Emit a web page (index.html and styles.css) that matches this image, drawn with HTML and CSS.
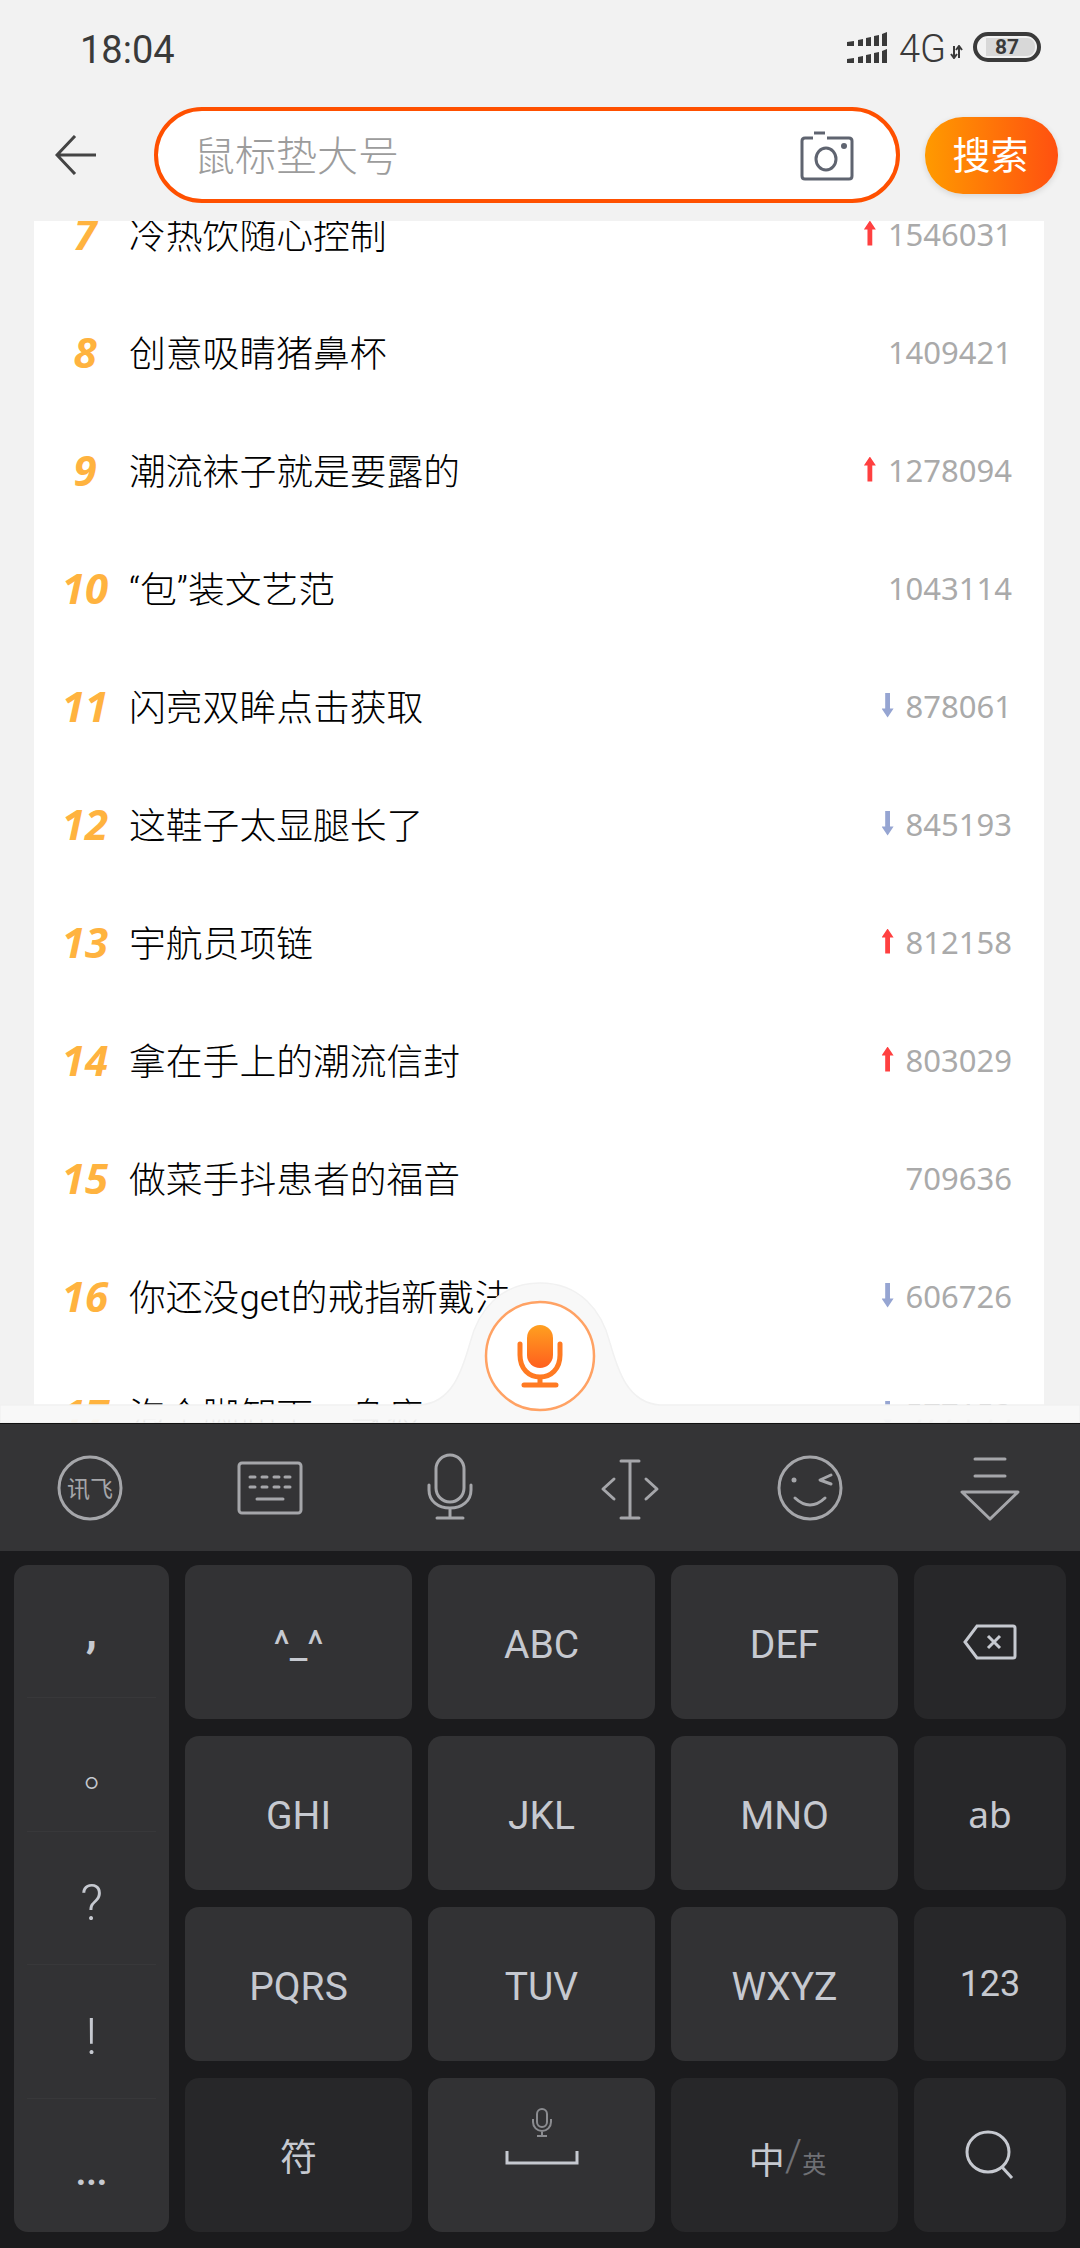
FILE: index.html
```html
<!DOCTYPE html>
<html lang="zh-CN">
  <head>
    <meta charset="UTF-8" />
    <meta name="viewport" content="width=device-width, initial-scale=1.0" />
    <title>搜索</title>
    <link rel="stylesheet" href="styles.css">
  </head>
  <body>
    <div class="page">
      <div class="status-bar">
        <span class="status-time">18:04</span>
        <div class="status-right">
          <svg class="signal" width="40" height="31" viewBox="0 0 40 31">
            <path d="M0 10 L7 9 V14 H0Z M11 8 L16 7 V14 H11Z M19 6 L24 5 V14 H19Z M27 4 L32 3 V14 H27Z M35 2 L40 0 V14 H35Z" />
            <path d="M0 27 L7 26 V31 H0Z M11 25 L16 24 V31 H11Z M19 23 L24 22 V31 H19Z M27 21 L32 20 V31 H27Z M35 19 L40 17 V31 H35Z" />
          </svg>
          <span class="network">4G</span>
          <svg class="net-arrows" width="13" height="14" viewBox="0 0 13 14">
            <path d="M4 1 V13 M1 9 L4 13 L7 9 M9 13 V1 M6 5 L9 1 L12 5" />
          </svg>
          <div class="battery"><span class="battery-level">87</span></div>
        </div>
      </div>

      <div class="search-bar">
        <svg class="back-icon" width="41" height="40" viewBox="0 0 41 40">
          <path d="M41 20 H2 M20 1 L2 20 L20 39" />
        </svg>
        <div class="search-box">
          <span class="search-placeholder">鼠标垫大号</span>
          <svg class="camera-icon" width="54" height="50" viewBox="0 0 54 50">
            <path d="M13 7 H5 Q2 7 2 10 V45 Q2 48 5 48 H49 Q52 48 52 45 V10 Q52 7 49 7 H27" />
            <path d="M14 2 H25" />
            <ellipse cx="26" cy="28" rx="10" ry="11" />
            <circle class="camera-dot" cx="44" cy="15" r="3" />
          </svg>
        </div>
        <button class="search-btn">搜索</button>
      </div>

      <div class="list-area">
        <div class="list-card">
          <div class="rank-row"><span class="rank">7</span><span class="rank-title">冷热饮随心控制</span><span class="trend trend-up"></span><span class="rank-count">1546031</span></div>
          <div class="rank-row"><span class="rank">8</span><span class="rank-title">创意吸睛猪鼻杯</span><span class="rank-count">1409421</span></div>
          <div class="rank-row"><span class="rank">9</span><span class="rank-title">潮流袜子就是要露的</span><span class="trend trend-up"></span><span class="rank-count">1278094</span></div>
          <div class="rank-row"><span class="rank">10</span><span class="rank-title">“包”装文艺范</span><span class="rank-count">1043114</span></div>
          <div class="rank-row"><span class="rank">11</span><span class="rank-title">闪亮双眸点击获取</span><span class="trend trend-down"></span><span class="rank-count">878061</span></div>
          <div class="rank-row"><span class="rank">12</span><span class="rank-title">这鞋子太显腿长了</span><span class="trend trend-down"></span><span class="rank-count">845193</span></div>
          <div class="rank-row"><span class="rank">13</span><span class="rank-title">宇航员项链</span><span class="trend trend-up"></span><span class="rank-count">812158</span></div>
          <div class="rank-row"><span class="rank">14</span><span class="rank-title">拿在手上的潮流信封</span><span class="trend trend-up"></span><span class="rank-count">803029</span></div>
          <div class="rank-row"><span class="rank">15</span><span class="rank-title">做菜手抖患者的福音</span><span class="rank-count">709636</span></div>
          <div class="rank-row"><span class="rank">16</span><span class="rank-title">你还没get的戒指新戴法</span><span class="trend trend-down"></span><span class="rank-count">606726</span></div>
          <div class="rank-row"><span class="rank">17</span><span class="rank-title">泡个脚卸下一身疲</span><span class="trend trend-down"></span><span class="rank-count">577153</span></div>
        </div>

        <svg class="voice-dock" width="1080" height="142" viewBox="0 0 1080 142">
          <defs>
            <linearGradient id="dockFill" gradientUnits="userSpaceOnUse" x1="0" y1="124" x2="0" y2="142">
              <stop offset="0.75" stop-color="#f8f8f8" />
              <stop offset="1" stop-color="#f8f8f8" stop-opacity="0.9" />
            </linearGradient>
            <linearGradient id="micFill" x1="0" y1="0" x2="0" y2="1">
              <stop offset="0" stop-color="#ffa020" />
              <stop offset="1" stop-color="#ff5f1e" />
            </linearGradient>
          </defs>
          <path class="dock-shape" d="M0 124 H420 C452 122 462 90 470 62 C478 30 500 2 540 2 C580 2 602 30 610 62 C618 90 628 122 660 124 H1080 V142 H0 Z" />
          <circle class="dock-circle" cx="540" cy="75" r="54" />
          <rect x="527" y="44" width="26" height="43" rx="13" fill="url(#micFill)" />
          <path class="dock-mic" d="M520 63 V74 C520 88 529 96 540 96 C551 96 560 88 560 74 V63 M540 96 V103 M524 104 H556" />
        </svg>
      </div>

      <div class="kb-toolbar">
        <div class="kb-tool">
          <svg width="72" height="72" viewBox="0 0 72 72">
            <circle cx="36" cy="36" r="31" />
            <text class="kb-logo-text" x="36" y="45">讯飞</text>
          </svg>
        </div>
        <div class="kb-tool">
          <svg width="72" height="72" viewBox="0 0 72 72">
            <rect x="5" y="11" width="62" height="50" rx="3" />
            <path d="M16 25 H21 M28 25 H33 M40 25 H45 M51 25 H56 M16 35 H21 M28 35 H33 M40 35 H45 M51 35 H56 M23 47 H49" />
          </svg>
        </div>
        <div class="kb-tool">
          <svg width="72" height="72" viewBox="0 0 72 72">
            <rect x="22" y="3" width="28" height="47" rx="14" />
            <path d="M15 33 V38 C15 49 24 56 36 56 C48 56 57 49 57 38 V33 M36 56 V66 M23 66 H49" />
          </svg>
        </div>
        <div class="kb-tool">
          <svg width="72" height="72" viewBox="0 0 72 72">
            <path d="M36 9 V66 M27 9 H45 M27 66 H45 M20 27 L9 37 L20 47 M52 27 L63 37 L52 47" />
          </svg>
        </div>
        <div class="kb-tool">
          <svg width="72" height="72" viewBox="0 0 72 72">
            <circle cx="36" cy="36" r="31" />
            <circle class="kb-dot" cx="20" cy="28" r="2.5" />
            <path d="M57 23 L46 28 L57 32 M21 46 Q36 60 51 46" />
          </svg>
        </div>
        <div class="kb-tool">
          <svg width="72" height="72" viewBox="0 0 72 72">
            <path d="M21 7 H51 M21 24 H51 M8 40 H64 L36 67 Z" />
          </svg>
        </div>
      </div>

      <div class="keyboard">
        <div class="punct-col">
          <div class="punct-key punct-comma">,</div>
          <div class="punct-key punct-stop">。</div>
          <div class="punct-key punct-ask">?</div>
          <div class="punct-key punct-bang">!</div>
          <div class="punct-key punct-dots">...</div>
        </div>

        <div class="key">^_^</div>
        <div class="key">ABC</div>
        <div class="key">DEF</div>
        <div class="key key-dark key-plain">
          <svg class="key-icon" width="54" height="36" viewBox="0 0 54 36">
            <path d="M14 2 H50 Q52 2 52 4 V32 Q52 34 50 34 H14 L2 18 Z M25 12 L37 24 M37 12 L25 24" />
          </svg>
        </div>

        <div class="key">GHI</div>
        <div class="key">JKL</div>
        <div class="key">MNO</div>
        <div class="key key-dark key-sans">ab</div>

        <div class="key">PQRS</div>
        <div class="key">TUV</div>
        <div class="key">WXYZ</div>
        <div class="key key-dark key-num">123</div>

        <div class="key key-dark key-cjk">符</div>
        <div class="key key-space">
          <svg class="space-mic" width="24" height="30" viewBox="0 0 24 30">
            <rect x="7" y="1" width="10" height="18" rx="5" />
            <path d="M3 11 V14 C3 19 7 23 12 23 C17 23 21 19 21 14 V11 M12 23 V28 M7 28 H17" />
          </svg>
          <svg class="space-bar" width="74" height="14" viewBox="0 0 74 14">
            <path d="M2 0 V12 H72 V0" />
          </svg>
        </div>
        <div class="key key-dark key-lang">
          <span class="lang-main">中</span><span class="lang-slash">/</span><span class="lang-sub">英</span>
        </div>
        <div class="key key-dark key-plain">
          <svg class="key-icon" width="50" height="50" viewBox="0 0 50 50">
            <ellipse cx="23" cy="22" rx="21" ry="20" />
            <path d="M37 37 L47 48" />
          </svg>
        </div>
      </div>
    </div>
  </body>
</html>
```

FILE: styles.css
```css
* {
  box-sizing: border-box;
}
body {
  margin: 0;
  background: #f2f2f2;
  font-family: "Roboto", "Noto Sans CJK SC", sans-serif;
}
.page {
  width: 1080px;
  height: 2248px;
  display: flex;
  flex-direction: column;
  overflow: hidden;
}

/* status bar */
.status-bar {
  height: 89px;
  padding: 5px 39px 0 80px;
  display: flex;
  align-items: center;
  justify-content: space-between;
  color: #3a3a3a;
}
.status-time {
  font-size: 38px;
  padding-top: 6px;
}
.status-right {
  display: flex;
  align-items: center;
}
.signal path {
  fill: #3a3a3a;
}
.network {
  font-size: 38px;
  margin-left: 12px;
  padding-top: 3px;
  font-weight: 300;
}
.net-arrows {
  margin: 10px 10px 0 4px;
}
.net-arrows path {
  fill: none;
  stroke: #3a3a3a;
  stroke-width: 2;
}
.battery {
  width: 68px;
  height: 30px;
  border: 4px solid #3a3a3a;
  border-radius: 15px;
  padding: 2px 2px 2px 9px;
  display: flex;
}
.battery-level {
  flex: 1;
  background: #d8d8d8;
  border-radius: 0 8px 8px 0;
  font-size: 21px;
  font-weight: 700;
  line-height: 18px;
  padding-left: 9px;
}

/* search */
.search-bar {
  height: 132px;
  padding-left: 55px;
  display: flex;
  align-items: center;
}
.back-icon {
  margin-right: 58px;
  flex: none;
}
.back-icon path {
  fill: none;
  stroke: #444;
  stroke-width: 3;
}
.search-box {
  width: 746px;
  height: 96px;
  background: white;
  border: 4px solid #ff5000;
  border-radius: 48px;
  padding: 0 42px 0 36px;
  display: flex;
  align-items: center;
  justify-content: space-between;
}
.search-placeholder {
  font-size: 41px;
  font-weight: 300;
  color: #9c9c9c;
  font-family: "Noto Sans CJK SC", sans-serif;
  padding-bottom: 5px;
}
.camera-icon {
  margin-top: 2px;
}
.camera-icon path,
.camera-icon ellipse {
  fill: none;
  stroke: #5f6470;
  stroke-width: 3;
}
.camera-dot {
  fill: #5f6470;
}
.search-btn {
  width: 133px;
  height: 77px;
  margin-left: 25px;
  border: none;
  border-radius: 38px;
  background: linear-gradient(to right, #ff9a00, #ff5010);
  box-shadow: 0 2px 6px rgba(0, 0, 0, 0.12);
  color: white;
  font-size: 38px;
  font-family: "Noto Sans CJK SC", sans-serif;
  padding: 0 2px 5px 0;
}

/* ranking list, scrolled so that row 7 is cut by the header */
.list-area {
  position: relative;
  flex: 1;
  overflow: hidden;
}
.list-card {
  margin: -47px 36px 0 34px;
  background: white;
}
.rank-row {
  height: 118px;
  padding: 0 32px 0 12px;
  display: flex;
  align-items: center;
}
.rank {
  width: 80px;
  margin: 0 4px 0 -1px;
  text-align: center;
  font-family: "Open Sans", sans-serif;
  font-size: 42px;
  font-weight: 700;
  font-style: italic;
  color: #ffb33f;
}
.rank-title {
  flex: 1;
  font-size: 36.8px;
  font-weight: 300;
  color: #000;
  font-family: "Roboto", "Noto Sans CJK SC", sans-serif;
}
.rank-count {
  font-family: "Noto Sans", sans-serif;
  font-size: 31px;
  color: #aaa;
  padding-top: 2px;
}
.trend {
  width: 12px;
  height: 25px;
  margin-right: 12px;
}
.trend-up {
  background: #ff4040;
  clip-path: polygon(50% 0, 100% 36%, 70% 36%, 70% 100%, 30% 100%, 30% 36%, 0 36%);
}
.trend-down {
  background: #96a5d2;
  clip-path: polygon(30% 0, 70% 0, 70% 64%, 100% 64%, 50% 100%, 0 64%, 30% 64%);
}

/* voice button sitting over the list */
.voice-dock {
  position: absolute;
  left: 0;
  bottom: 0;
  display: block;
}
.dock-shape {
  fill: url(#dockFill);
  stroke: #f1f1f1;
  stroke-width: 1.5;
}
.dock-circle {
  fill: white;
  stroke: #ffa264;
  stroke-width: 2.5;
}
.dock-mic {
  fill: none;
  stroke: #ff7a22;
  stroke-width: 5;
  stroke-linecap: round;
}

/* keyboard */
.kb-toolbar {
  height: 128px;
  background: #343436;
  border-top: 1px solid #111;
  display: grid;
  grid-template-columns: repeat(6, 180px);
  align-items: center;
  justify-items: center;
}
.kb-tool svg {
  display: block;
}
.kb-tool svg circle,
.kb-tool svg rect,
.kb-tool svg path {
  fill: none;
  stroke: #a5a6aa;
  stroke-width: 3;
  stroke-linecap: round;
  stroke-linejoin: round;
}
.kb-tool svg .kb-dot {
  fill: #a5a6aa;
  stroke: none;
}
.kb-logo-text {
  fill: #a5a6aa;
  font-size: 23px;
  text-anchor: middle;
  font-family: "Noto Sans CJK SC", sans-serif;
}
.keyboard {
  flex: none;
  height: 697px;
  padding: 14px 14px 16px;
  background: #1b1b1d;
  display: grid;
  grid-template-columns: 155px 227px 227px 227px 152px;
  grid-template-rows: repeat(4, 154px);
  column-gap: 16px;
  row-gap: 17px;
}
.key {
  background: #323234;
  border-radius: 14px;
  color: #c6c9d0;
  font-size: 39px;
  padding-top: 5px;
  display: flex;
  align-items: center;
  justify-content: center;
}
.key-dark {
  background: #272729;
}
.key-plain {
  padding-top: 0;
}
.key-sans {
  font-family: "Noto Sans", sans-serif;
  font-size: 37px;
  padding-top: 0;
}
.key-num {
  font-size: 36px;
  padding: 0 0 1px;
}
.key-cjk {
  font-family: "Noto Sans CJK SC", sans-serif;
  font-size: 37px;
  padding-top: 0;
}
.key-icon path,
.key-icon ellipse {
  fill: none;
  stroke: #c6c9d0;
  stroke-width: 3;
}
.key-space {
  flex-direction: column;
  padding: 0 0 38px;
}
.space-mic {
  margin-bottom: 13px;
}
.space-mic rect,
.space-mic path {
  fill: none;
  stroke: #8b8c90;
  stroke-width: 2;
}
.space-bar path {
  fill: none;
  stroke: #c6c9d0;
  stroke-width: 3;
}
.key-lang {
  align-items: flex-end;
  padding: 0 0 54px 6px;
  font-family: "Noto Sans CJK SC", sans-serif;
}
.lang-main {
  font-size: 36px;
  line-height: 40px;
}
.lang-slash {
  font-family: "Roboto", sans-serif;
  font-weight: 300;
  font-size: 44px;
  line-height: 44px;
  color: #6f7075;
}
.lang-sub {
  font-size: 24px;
  line-height: 30px;
  color: #6f7075;
}
.punct-col {
  grid-row: 1 / span 4;
  background: #323234;
  border-radius: 14px;
  padding: 0 13px;
  display: flex;
  flex-direction: column;
}
.punct-key {
  height: 133.4px;
  display: flex;
  align-items: center;
  justify-content: center;
  color: #c6c9d0;
  font-size: 50px;
  font-weight: 300;
  border-bottom: 1px solid #38383a;
}
.punct-key:last-child {
  border-bottom: none;
}
.punct-comma {
  font-size: 46px;
  font-weight: 700;
}
.punct-stop {
  font-family: "Noto Sans CJK TC", sans-serif;
  font-size: 40px;
  padding-top: 32px;
}
.punct-ask {
  padding-top: 10px;
}
.punct-bang {
  padding-top: 12px;
}
.punct-dots {
  font-size: 36px;
  font-weight: 700;
  padding-top: 16px;
}
```
